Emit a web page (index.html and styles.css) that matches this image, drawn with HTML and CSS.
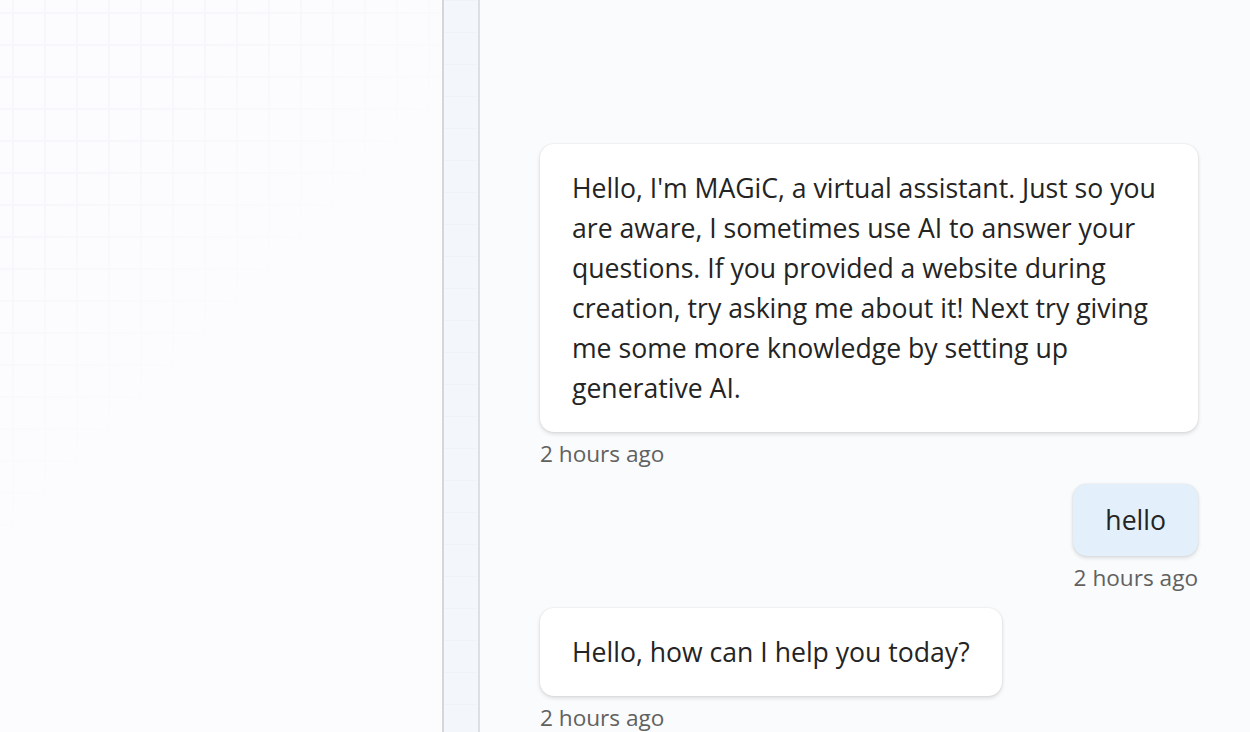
FILE: index.html
```html
<!DOCTYPE html>
<html>
<head>
<meta charset="utf-8">
<link rel="stylesheet" href="styles.css">
</head>
<body>
<div class="app">
  <aside class="canvas"></aside>
  <div class="rail"></div>
  <main class="chat">
    <div class="messages">
      <div class="msg bot">
        <div class="bubble">Hello, I'm MAGiC, a virtual assistant. Just so you are aware, I sometimes use AI to answer your questions. If you provided a website during creation, try asking me about it! Next try giving me some more knowledge by setting up generative AI.</div>
        <div class="time">2 hours ago</div>
      </div>
      <div class="msg user">
        <div class="bubble">hello</div>
        <div class="time">2 hours ago</div>
      </div>
      <div class="msg bot">
        <div class="bubble">Hello, how can I help you today?</div>
        <div class="time">2 hours ago</div>
      </div>
    </div>
  </main>
</div>
</body>
</html>
```
FILE: styles.css
```css
html, body {
  margin: 0;
  padding: 0;
  height: 100%;
  overflow: hidden;
}
body {
  font-family: "Open Sans", "Noto Sans", sans-serif;
  background: #fafbfd;
  color: #242424;
}
.app {
  display: flex;
  height: 732px;
}
.canvas {
  width: 442px;
  flex: none;
  background-color: #fcfcfe;
  background-image:
    linear-gradient(135deg, rgba(252,252,254,0) 0%, rgba(252,252,254,0) 20%, #fcfcfe 50%),
    linear-gradient(to right, #f6f7fa 2px, transparent 2px),
    linear-gradient(to bottom, #f6f7fa 2px, transparent 2px);
  background-size: 100% 100%, 32px 32px, 32px 32px;
  background-position: 0 0, 12px 0, 0 12px;
  border-right: 2px solid #d6d6da;
}
.rail {
  width: 34px;
  flex: none;
  background-color: #f3f6fa;
  background-image:
    linear-gradient(to bottom, #eff2f6 1px, transparent 1px);
  background-size: 32px 32px;
  border-right: 2px solid #dedfe2;
}
.chat {
  flex: 1;
  display: flex;
  flex-direction: column;
  justify-content: flex-end;
  padding: 0 52px 0 60px;
  background: #fafbfd;
}
.messages {
  display: flex;
  flex-direction: column;
  gap: 16px;
}
.msg {
  display: flex;
  flex-direction: column;
  align-items: flex-start;
}
.msg.user {
  align-items: flex-end;
}
.bubble {
  background: #ffffff;
  border-radius: 14px;
  padding: 24px 32px;
  font-size: 26.6px;
  line-height: 40px;
  max-width: 594px;
  box-shadow: 0 2px 4px rgba(0,0,0,0.13), 0 0 2px rgba(0,0,0,0.1);
}
.user .bubble {
  background: #e3f0fb;
  padding: 16px 32px;
}
.time {
  margin-top: 8px;
  font-size: 22.6px;
  line-height: 28px;
  color: #616161;
}
```
